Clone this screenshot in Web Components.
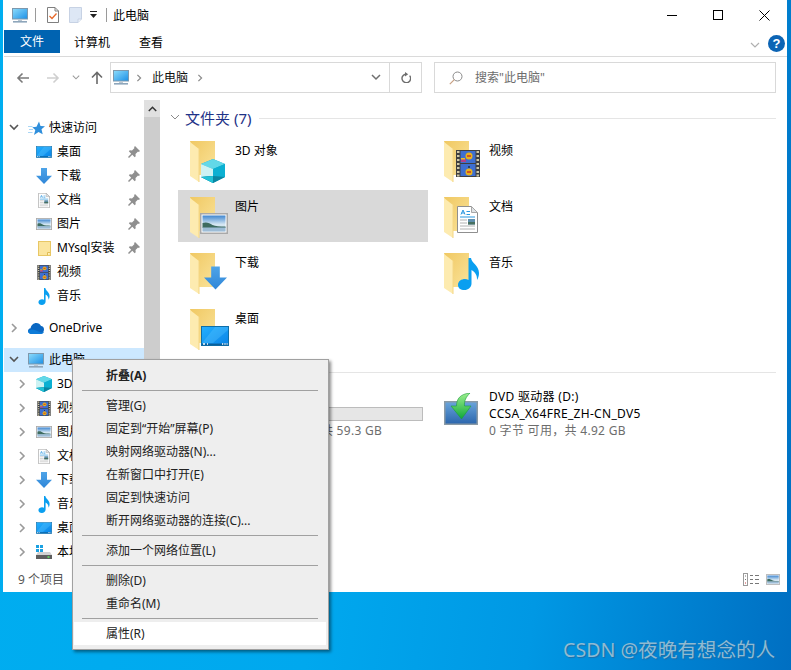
<!DOCTYPE html>
<html lang="zh-CN">
<head>
<meta charset="utf-8">
<title>此电脑</title>
<style>
  html, body { margin: 0; padding: 0; height: 670px; overflow: hidden; }
  body { font: 12px/17px "Noto Sans", "Noto Sans CJK SC", sans-serif; color: #000; }
</style>
</head>
<body>
<win-desktop>
  <win-window>
    <win-titlebar>此电脑</win-titlebar>
    <win-ribbon></win-ribbon>
    <win-address></win-address>
    <win-main>
      <win-nav slot="nav">
        <nav-row level="0" chev="down" icon="star">快速访问</nav-row>
        <nav-row level="1" icon="desktop" pin>桌面</nav-row>
        <nav-row level="1" icon="arrow" pin>下载</nav-row>
        <nav-row level="1" icon="doc" pin>文档</nav-row>
        <nav-row level="1" icon="pic" pin>图片</nav-row>
        <nav-row level="1" icon="smallfolder" pin>MYsql安装</nav-row>
        <nav-row level="1" icon="video">视频</nav-row>
        <nav-row level="1" icon="music">音乐</nav-row>
        <nav-row level="0" chev="right" icon="cloud" gap>OneDrive</nav-row>
        <nav-row level="0" chev="down" icon="monitor" gap active>此电脑</nav-row>
        <nav-row level="1" chev="right" icon="cube">3D 对象</nav-row>
        <nav-row level="1" chev="right" icon="video">视频</nav-row>
        <nav-row level="1" chev="right" icon="pic">图片</nav-row>
        <nav-row level="1" chev="right" icon="doc">文档</nav-row>
        <nav-row level="1" chev="right" icon="arrow">下载</nav-row>
        <nav-row level="1" chev="right" icon="music">音乐</nav-row>
        <nav-row level="1" chev="right" icon="desktop">桌面</nav-row>
        <nav-row level="1" chev="right" icon="storage">本地磁盘 (C:)</nav-row>
      </win-nav>
      <group-head>文件夹 (7)</group-head>
      <tile-grid>
        <win-tile over="cube">3D 对象</win-tile>
        <win-tile over="video">视频</win-tile>
        <win-tile over="pic" selected>图片</win-tile>
        <win-tile over="doc">文档</win-tile>
        <win-tile over="arrow">下载</win-tile>
        <win-tile over="music">音乐</win-tile>
        <win-tile over="desktop">桌面</win-tile>
      </tile-grid>
      <group-head second>设备和驱动器 (2)</group-head>
      <tile-grid>
        <drive-tile icon="hdd" name="本地磁盘 (C:)" free="34.6 GB 可用，共 59.3 GB" bar></drive-tile>
        <drive-tile icon="dvd" name="DVD 驱动器 (D:)" label="CCSA_X64FRE_ZH-CN_DV5" free="0 字节 可用，共 4.92 GB"></drive-tile>
      </tile-grid>
    </win-main>
    <win-status>9 个项目</win-status>
  </win-window>

  <ctx-menu slot="over">
    <ctx-item bold>折叠(A)</ctx-item>
    <ctx-sep></ctx-sep>
    <ctx-item>管理(G)</ctx-item>
    <ctx-item>固定到“开始”屏幕(P)</ctx-item>
    <ctx-item>映射网络驱动器(N)...</ctx-item>
    <ctx-item>在新窗口中打开(E)</ctx-item>
    <ctx-item>固定到快速访问</ctx-item>
    <ctx-item>断开网络驱动器的连接(C)...</ctx-item>
    <ctx-sep></ctx-sep>
    <ctx-item>添加一个网络位置(L)</ctx-item>
    <ctx-sep></ctx-sep>
    <ctx-item>删除(D)</ctx-item>
    <ctx-item>重命名(M)</ctx-item>
    <ctx-sep></ctx-sep>
    <ctx-item hot>属性(R)</ctx-item>
  </ctx-menu>
  <span slot="over" class="mark" style="position:absolute;left:563px;top:635px;font:19.6px/30px 'Noto Sans','Noto Sans CJK SC',sans-serif;color:#8fbad2;text-shadow:1px 1px 1px #1c6ea8;white-space:nowrap">CSDN @夜晚有想念的人</span>
</win-desktop>

<script>
const sky = `<linearGradient id="sky" x1="0" y1="0" x2="0" y2="1"><stop offset="0" stop-color="#3f86d0"/><stop offset=".55" stop-color="#d4e6f2"/></linearGradient>`;
const scr = `<linearGradient id="scr" x1="0" y1="0" x2="1" y2="1"><stop offset="0" stop-color="#8ddcfb"/><stop offset="1" stop-color="#1b8fe6"/></linearGradient>`;

// name: [viewBox width, viewBox height, markup]
const ICONS = {
  monitor: [16, 15, `<defs>${scr}</defs>
    <rect x=".5" y=".5" width="15" height="10.5" fill="url(#scr)" stroke="#7d98ad"/>
    <rect x="6" y="11.5" width="4" height="2" fill="#b9c6d0"/>
    <rect x="1" y="13" width="14" height="1.6" fill="#8ea6bb"/>`],
  desktop: [28, 20, `<defs><linearGradient id="d" x1="0" y1="0" x2="1" y2="1"><stop offset="0" stop-color="#23b0ff"/><stop offset="1" stop-color="#0a83e6"/></linearGradient></defs>
    <rect x=".5" y=".5" width="27" height="19" fill="url(#d)" stroke="#0f6ea8"/>
    <path d="M1 17 14 1h13v3L12 17z" fill="#5cc6ff" opacity=".35"/>
    <rect x="1" y="17.6" width="26" height="1.6" fill="#0b5f9a"/>
    <path d="M2 18h2M6 18h1M21 18h1.2M23.4 18h1.2M25.6 18h1" stroke="#fff" stroke-width="1.4"/>`],
  arrow: [24, 24, `<defs><linearGradient id="a" x1="0" y1="0" x2="0" y2="1"><stop offset="0" stop-color="#4ea4e8"/><stop offset="1" stop-color="#2f86d8"/></linearGradient></defs>
    <path d="M7.5 0h9v11.5H24L12 24 0 11.5h7.5z" fill="url(#a)"/>`],
  doc: [21, 27, `<path d="M.5.5h14l6 6v20H.5z" fill="#fff" stroke="#8f8f8f"/>
    <path d="M14.5.5v6h6z" fill="#dfe3e6" stroke="#a8a8a8"/>
    <path d="M4 8.5 6 4l2 4.500M4.500 7h3" fill="none" stroke="#2b97e0" stroke-width="1"/>
    <path d="M9.500 5.500h3.500M9.500 8.500h3.500M3 11h15" stroke="#2b97e0" fill="none" stroke-width="1.200"/>
    <path d="M3 14h7M3 17h7M3 20h15M3 23h15" stroke="#b2b2b2" fill="none"/>
    <rect x="11" y="13" width="7" height="5.500" fill="#5f8fae"/><rect x="11" y="16" width="7" height="2.500" fill="#48705f"/>`],
  pic: [28, 21, `<defs>${sky}</defs>
    <rect x=".75" y=".75" width="26.500" height="19.500" fill="#fff" stroke="#a9a9a9" stroke-width="1.500"/>
    <rect x="2.500" y="2.500" width="23" height="16" fill="url(#sky)"/>
    <path d="M2.500 10c4-1.500 7 0 10 2 3 1.500 7 1.500 13 1.500V15h-23z" fill="#3d6b60"/>
    <rect x="2.500" y="14.500" width="23" height="4" fill="#9dbcd6"/>`],
  video: [24, 27, `<rect width="24" height="27" fill="#3f3f3f"/>
    <path d="M1 2h2.500M1 6h2.500M1 10h2.500M1 14h2.500M1 18h2.500M1 22h2.500M1 25.500h2.500M20.500 2H23M20.500 6H23M20.500 10H23M20.500 14H23M20.500 18H23M20.500 22H23M20.500 25.500H23" stroke="#cfc9a8" stroke-width="2"/>
    <rect x="4.500" y="1" width="15" height="12" fill="#3e6fd0"/><rect x="4.500" y="14" width="15" height="12" fill="#3e6fd0"/>
    <circle cx="13" cy="6" r="3.500" fill="#e8b21c"/><path d="M11 6h4" stroke="#c9342a" stroke-width="1.500"/><path d="M5 9h5v3H5z" fill="#b0408a"/><path d="M5 8h4v1.500H5z" fill="#e6c028"/>
    <circle cx="13" cy="22" r="3.500" fill="#e8b21c"/><path d="M11 22h4" stroke="#c9342a" stroke-width="1.500"/><path d="M12.500 16h1v2h-1z" fill="#111"/>`],
  music: [21, 32, `<path d="M10.500 0H13c.5 5 8 7.500 8 15 0 3-1 5.500-2 7 .5-5-2.500-8.500-5.500-10v13.500c0 4-3.500 6.500-7 6.500-4 0-6.500-2-6.500-5 0-4 3.500-6 7-6 1.300 0 2.500.3 3.500 1z" fill="#0a9ff0"/>`],
  cube: [24, 24, `<path d="M12 0 24 5v13l-12 6L0 18V5z" fill="#0fa6c9"/>
    <path d="M0 5 12 0l12 5-12 5z" fill="#62d8e8"/>
    <path d="M0 5l12 5v7L0 18z" fill="#cdf2f3"/>
    <path d="M12 10l12-5v13l-12-1z" fill="#0cb0d2"/>
    <path d="M0 18l12-1 12 1-12 6z" fill="#0a86a2"/>
    <path d="M0 18l12-1v7z" fill="#22c2d6"/>`],
  star: [17, 15, `<path d="M11 .5l1.500 4.600 4.500.200-3.500 3 1.200 5L10.500 11 6 14l1.300-5-3-2.800 4.200-.400z" fill="#2f8fdc"/>
    <path d="M0 5.500h4.500M1 8.500h4M0 11.500h4.500" stroke="#a9d6f5" stroke-width="1.200"/>`],
  cloud: [16, 11, `<path d="M3.500 11C1.500 11 0 9.800 0 8.100c0-1.500 1-2.700 2.600-2.900C3.100 2.200 5.500 0 8.300 0c2.100 0 3.900 1.200 4.700 3 1.800.1 3 1.400 3 3.500S14.500 11 12.800 11z" fill="#0a67c2"/>
    <path d="M3.500 11C1.500 11 0 9.800 0 8.100 2 6.500 5 6 8 7.500s5.500 2.500 8 1.500c-.5 1.300-1.700 2-3.200 2z" fill="#0d7bd8"/>`],
  smallfolder: [13, 15, `<rect x=".5" y=".5" width="12" height="14" fill="#fbe59e" stroke="#e8c765"/>
    <path d="M9.500 14.500v-3h3" fill="#fff3c8" stroke="#e0bc55"/>`],
  storage: [16, 14, `<path d="M0 0h3v3H0zM4 0h3v3H4zM0 4h3v3H0zM4 4h3v3H4z" fill="#1ba1e2"/>
    <path d="M2 7h12l2 3H0z" fill="#d2d2d2"/>
    <rect y="10" width="16" height="4" fill="#5e5e5e"/>
    <rect x="11.500" y="11.200" width="2" height="1.600" fill="#5fe05f"/>`],
  pin: [12, 12, `<path d="M7 0l5 5-1.200 1L10 5.500 7.500 8l.2 2.200-1 1L4.300 8.800 1 12 0 11l3.200-3.300L.8 5.300l1-1L4 4.500 6.500 2 6 1.200z" fill="#8f8f8f"/>`],
  hdd: [34, 34, `<path d="M2 6h30l2 18H0z" fill="#dcdcdc" stroke="#9a9a9a"/><rect y="24" width="34" height="9" fill="#6a6a6a"/><rect x="26" y="27" width="4" height="3" fill="#5fe05f"/>`],
  dvd: [34, 32, `<defs><linearGradient id="s" x1="0" y1="0" x2="0" y2="1"><stop offset="0" stop-color="#6aa5dc"/><stop offset="1" stop-color="#2a65ac"/></linearGradient>
    <linearGradient id="g" x1="0" y1="0" x2="0" y2="1"><stop offset="0" stop-color="#9df08e"/><stop offset="1" stop-color="#0fa838"/></linearGradient></defs>
    <rect x=".75" y="8.750" width="32.500" height="22.500" fill="url(#s)" stroke="#8a9aa5" stroke-width="1.500"/>
    <path d="M26 0C16 1 12.500 6 12.500 13H7l10.500 13L27 13h-6.500C20 8 22 4 26 0z" fill="url(#g)" stroke="#1d9a3c" stroke-width=".6"/>`],
  checkdoc: [12, 16, `<path d="M.5.500h7.500l3.500 3.500v11.500H.5z" fill="#fff" stroke="#7f7f7f"/><path d="M8 .5V4h3.500" fill="none" stroke="#7f7f7f"/>
    <path d="M2.500 9l2.500 2.500 4.500-5" fill="none" stroke="#e8692a" stroke-width="1.300"/>`],
  palefile: [13, 16, `<path d="M.5.500h12v11.500l-3.500 3.500H.5z" fill="#dde7f5" stroke="#c7d2e4"/><path d="M12.500 12H9v3.500" fill="#eef3fa" stroke="#c7d2e4"/>`],
  search: [14, 14, `<circle cx="8.500" cy="5.500" r="4.500" fill="none" stroke="#8a8a8a"/><path d="M5.300 8.700.8 13.200" stroke="#c9a184" stroke-width="1.200"/>`],
  refresh: [11, 11, `<path d="M9.600 3.600A4.300 4.300 0 1 1 5.300 2.200" fill="none" stroke="#6d6d6d" stroke-width="1.400"/><path d="M5 0l3.200 2.200L5 4.500z" fill="#6d6d6d"/>`],
  detailsview: [17, 13, `<rect x=".5" y=".5" width="4" height="12" fill="#fff" stroke="#9a9a9a"/><path d="M2 3h1M2 6.500h1" stroke="#777"/><path d="M2 10h1" stroke="#d04040"/>
    <path d="M7 2.500h3M12 2.500h4M7 6.500h3M12 6.500h4M7 10.500h3M12 10.500h4" stroke="#777"/>`],
};

// over-icon box on a big folder: x, y, w, h
const OVER = {
  cube: [11, 19, 24, 24], pic: [10, 17, 28, 21], arrow: [14, 14, 23, 24], desktop: [11, 18, 28, 20],
  video: [12, 10, 24, 27], doc: [13, 10, 21, 27], music: [14, 6, 21, 32],
};

function define(name, css, html, init) {
  customElements.define(name, class extends HTMLElement {
    constructor() {
      super();
      this.attachShadow({ mode: 'open' });
      this.shadowRoot.innerHTML = `<style>${css}</style>${html}`;
      if (init) init(this, this.shadowRoot);
    }
  });
}

class WinIcon extends HTMLElement {
  constructor() {
    super();
    this.attachShadow({ mode: 'open' });
  }
  connectedCallback() {
    const [vw, vh, body] = ICONS[this.getAttribute('name')];
    const w = this.getAttribute('w') || vw;
    const h = this.getAttribute('h') || vh;
    this.shadowRoot.innerHTML = `<style>:host{display:block;flex:none;line-height:0}</style>
      <svg width="${w}" height="${h}" viewBox="0 0 ${vw} ${vh}" xmlns="http://www.w3.org/2000/svg">${body}</svg>`;
  }
}
customElements.define('win-icon', WinIcon);

class FolderIcon extends HTMLElement {
  constructor() {
    super();
    this.attachShadow({ mode: 'open' });
  }
  connectedCallback() {
    const over = this.getAttribute('over');
    const [x, y, w, h] = OVER[over];
    const [vw, vh, body] = ICONS[over];
    this.shadowRoot.innerHTML = `<style>:host{display:block;flex:none;line-height:0}</style>
      <svg width="45" height="48" viewBox="0 0 45 48" xmlns="http://www.w3.org/2000/svg">
        <defs><linearGradient id="f" x1="0" y1="0" x2="1" y2="1"><stop offset="0" stop-color="#f0c862"/><stop offset="1" stop-color="#fae39a"/></linearGradient></defs>
        <path d="M0 1h25v34H9z" fill="url(#f)"/>
        <path d="M0 2l9 7v33l-9-6z" fill="#fdebb0"/>
        <path d="M9 9v33" stroke="#f4d684"/>
        <svg x="${x}" y="${y}" width="${w}" height="${h}" viewBox="0 0 ${vw} ${vh}">${body}</svg>
      </svg>`;
  }
}
customElements.define('folder-icon', FolderIcon);

const chevron = (dir, color = '#7a7a7a', w = 1.5, size = 10) => {
  const pts = dir === 'down' ? '1,2 5,6 9,2' : '3,1 7,5 3,9';
  return `<svg width="${size}" height="${size}" viewBox="0 0 10 10"><polyline points="${pts}" fill="none" stroke="${color}" stroke-width="${w}"/></svg>`;
};

define('win-desktop', `
  :host { display: block; position: relative; width: 791px; height: 670px; overflow: hidden;
    background: linear-gradient(98deg, #00aef0 0%, #00a8ee 45%, #0098e4 70%, #006fc2 100%); }
`, `<slot></slot><slot name="over"></slot>`);

define('win-window', `
  :host { display: flex; flex-direction: column; width: 784px; height: 592px; margin-left: 3px; background: #fff; }
`, `<slot></slot>`);

define('win-titlebar', `
  :host { display: flex; align-items: center; height: 30px; flex: none; padding-left: 9px; }
  .sep { width: 1px; height: 14px; background: #9a9a9a; }
  .title { margin-left: 6px; }
  .caps { margin-left: auto; display: flex; align-items: center; }
  .cap { width: 46px; display: flex; justify-content: center; }
`, `
  <win-icon name="monitor"></win-icon>
  <span class="sep" style="margin-left:7px"></span>
  <win-icon name="checkdoc" style="margin-left:11px"></win-icon>
  <win-icon name="palefile" style="margin-left:10px"></win-icon>
  <svg style="margin-left:7px" width="10" height="10" viewBox="0 0 10 10"><path d="M1 1.500h7" stroke="#222"/><path d="M1 4h7L4.500 8z" fill="#222"/></svg>
  <span class="sep" style="margin-left:7px"></span>
  <span class="title"><slot></slot></span>
  <span class="caps">
    <span class="cap"><svg width="10" height="10"><path d="M0 5.500h10" stroke="#000"/></svg></span>
    <span class="cap"><svg width="10" height="10"><rect x=".5" y=".5" width="9" height="9" fill="none" stroke="#000"/></svg></span>
    <span class="cap"><svg width="11" height="11"><path d="M.5.500l10 10M10.500.500l-10 10" stroke="#000"/></svg></span>
  </span>
`);

define('win-ribbon', `
  :host { display: flex; align-items: stretch; height: 26px; flex: none; border-bottom: 1px solid #dadada; margin-left: 1px; font-size: 12px; }
  .tab { height: 23px; line-height: 25px; }
  .file { width: 56px; text-align: center; background: #0063b1; color: #fff; line-height: 23px; }
  .right { margin-left: auto; display: flex; align-items: flex-start; padding-top: 5px; gap: 7px; padding-right: 2px; }
  .help { width: 17px; height: 17px; border-radius: 50%; background: #0c64b4; color: #fff; font: bold 13px/17px "Liberation Sans", sans-serif; text-align: center; }
  .ch { margin-top: 3px; margin-right: 1px; }
`, `
  <span class="tab file">文件</span>
  <span class="tab" style="margin-left:14px">计算机</span>
  <span class="tab" style="margin-left:29px">查看</span>
  <span class="right"><span class="ch">${chevron('down', '#b0b0b0', 1.2)}</span><span class="help">?</span></span>
`);

define('win-address', `
  :host { display: flex; align-items: center; height: 31px; flex: none; margin-top: 5px; }
  .arrows { width: 107px; display: flex; align-items: center; flex: none; }
  .box { border: 1px solid #d9d9d9; height: 29px; display: flex; align-items: center; box-sizing: content-box; }
  .path { width: 310px; flex: none; }
  .crumb { margin-left: 9px; color: #111; }
  .refresh { width: 31px; height: 29px; border-left: 1px solid #d9d9d9; display: flex; align-items: center; justify-content: center; }
  .search { width: 340px; flex: none; margin-left: 12px; color: #6d6d6d; }
`, `
  <span class="arrows">
    <svg style="margin-left:13px" width="14" height="12" viewBox="0 0 14 12"><path d="M13 6H2M6.500 1.500 2 6l4.500 4.500" fill="none" stroke="#7a7a7a" stroke-width="1.600"/></svg>
    <svg style="margin-left:16px" width="14" height="12" viewBox="0 0 14 12"><path d="M1 6h11M7.500 1.500 12 6l-4.500 4.500" fill="none" stroke="#cfcfcf" stroke-width="1.600"/></svg>
    <span style="margin-left:12px;line-height:0">${chevron('down', '#9a9a9a', 1.3, 8)}</span>
    <svg style="margin-left:10px" width="14" height="14" viewBox="0 0 14 14"><path d="M7 13V2M2 6.500 7 1.500l5 5" fill="none" stroke="#6a6a6a" stroke-width="1.600"/></svg>
  </span>
  <span class="box path">
    <win-icon name="monitor" style="margin-left:2px"></win-icon>
    <span style="margin-left:6px;line-height:0">${chevron('right', '#8a8a8a', 1.5, 8)}</span>
    <span class="crumb">此电脑</span>
    <span style="margin-left:8px;line-height:0">${chevron('right', '#8a8a8a', 1.5, 8)}</span>
    <span style="margin-left:auto;margin-right:8px;line-height:0">${chevron('down', '#6f6f6f', 1.5)}</span>
    <span class="refresh"><win-icon name="refresh"></win-icon></span>
  </span>
  <span class="box search">
    <win-icon name="search" style="margin-left:14px"></win-icon>
    <span style="margin-left:12px">搜索"此电脑"</span>
  </span>
`);

define('win-main', `
  :host { display: flex; height: 472px; flex: none; margin-top: 5px; }
  .nav { flex: none; width: 157px; display: flex; }
  .content { flex: 1; min-width: 0; padding-top: 10px; }
`, `
  <div class="nav"><slot name="nav"></slot></div>
  <div class="content"><slot></slot></div>
`);

define('win-nav', `
  :host { display: flex; width: 157px; height: 472px; margin-left: 0; }
  .rows { width: 140px; padding: 18px 0 0 1px; flex: none; }
  .bar { width: 16px; flex: none; background: #f0f0f0; display: flex; flex-direction: column; margin-top: 2px; }
  .up { height: 17px; background: #e0e0e0; display: flex; align-items: center; justify-content: center; }
  .thumb { height: 320px; background: #cdcdcd; }
`, `
  <div class="rows"><slot></slot></div>
  <div class="bar">
    <div class="up"><svg width="9" height="6" viewBox="0 0 9 6"><path d="M.8 5 4.500 1.300 8.200 5" fill="none" stroke="#333" stroke-width="1.500"/></svg></div>
    <div class="thumb"></div>
  </div>
`);

define('nav-row', `
  :host { display: flex; align-items: center; height: 24px; white-space: nowrap; overflow: hidden; position: relative; }
  :host([gap]) { margin-top: 8px; }
  :host([active]) { background: #cce8ff; }
  .ch { width: 10px; flex: none; line-height: 0; }
  .txt { margin-left: 5px; padding-bottom: 2px; }
  .ic { display: flex; justify-content: center; flex: none; width: 16px; margin-left: 9px; }
  .pin { position: absolute; right: 4px; top: 6px; }
`, `<span class="ch"></span><span class="ic"></span><span class="txt"><slot></slot></span><win-icon class="pin" name="pin" hidden></win-icon>`,
(el, root) => {
  const lvl = el.getAttribute('level');
  const ch = el.getAttribute('chev');
  const chEl = root.querySelector('.ch');
  if (ch) chEl.innerHTML = chevron(ch, ch === 'down' ? '#555' : '#9a9a9a', 1.6);
  chEl.style.marginLeft = lvl === '0' ? '5px' : '13px';
  const icon = el.getAttribute('icon');
  const [vw, vh] = ICONS[icon];
  const sized = { desktop: [16, 12], arrow: [16, 16], doc: [12, 15], pic: [16, 12], video: [14, 15], music: [12, 17], cube: [16, 16] }[icon] || [vw, vh];
  root.querySelector('.ic').innerHTML = `<win-icon name="${icon}" w="${sized[0]}" h="${sized[1]}"></win-icon>`;
  if (el.hasAttribute('pin')) root.querySelector('.pin').hidden = false;
  else root.querySelector('.pin').remove();
});

define('group-head', `
  :host { display: flex; align-items: center; height: 20px; color: #1e3287; font-size: 15px; line-height: 20px; margin: 0 11px 6px 10px; }
  :host([second]) { margin-top: 8px; }
  .ch { line-height: 0; margin-right: 5px; }
  .line { flex: 1; height: 1px; background: #e5e5e5; margin-left: 8px; }
  .t { white-space: nowrap; }
`, `<span class="ch">${chevron('down', '#8a8a8a', 1)}</span><span class="t"><slot></slot></span><span class="line"></span>`);

define('tile-grid', `
  :host { display: grid; grid-template-columns: 250px 250px; column-gap: 4px; row-gap: 4px; margin-left: 18px; }
`, `<slot></slot>`);

define('win-tile', `
  :host { display: flex; height: 52px; padding-left: 12px; box-sizing: border-box; padding-top: 6px; }
  :host([selected]) { background: #d9d9d9; }
  .t { padding-top: 2px; }
`, `<span class="ic"></span><span class="t"><slot></slot></span>`,
(el, root) => {
  root.querySelector('.ic').innerHTML = `<folder-icon over="${el.getAttribute('over')}"></folder-icon>`;
});

define('drive-tile', `
  :host { display: flex; height: 52px; padding-left: 12px; box-sizing: border-box; letter-spacing: .3px; }
  .ic { width: 45px; flex: none; padding-top: 5px; }
  .body { flex: 1; min-width: 0; white-space: nowrap; padding-right: 5px; }
  .bar { height: 12px; margin: 2px 0 1px; border: 1px solid #bcbcbc; background: #e6e6e6; }
  .free { color: #6d6d6d; }
`, `<span class="ic"></span><div class="body"><div class="name"></div><div class="mid"></div><div class="free"></div></div>`,
(el, root) => {
  root.querySelector('.ic').innerHTML = `<win-icon name="${el.getAttribute('icon')}"></win-icon>`;
  root.querySelector('.name').textContent = el.getAttribute('name');
  root.querySelector('.free').textContent = el.getAttribute('free');
  const mid = root.querySelector('.mid');
  if (el.hasAttribute('bar')) mid.className = 'bar';
  else mid.textContent = el.getAttribute('label');
});

define('win-status', `
  :host { display: flex; align-items: center; height: 22px; flex: none; box-sizing: border-box; padding: 0 0 3px 15px; color: #555; }
  .views { margin-left: auto; display: flex; align-items: center; gap: 6px; padding-right: 7px; }
`, `<slot></slot><span class="views"><win-icon name="detailsview" style="margin-left:1px"></win-icon><win-icon name="pic" w="14" h="11"></win-icon></span>`);

define('ctx-menu', `
  :host { display: block; position: absolute; left: 72px; top: 359px; width: 252px; padding: 4px 2px 4px 1px; box-sizing: content-box;
    background: #eee; border: 1px solid #a0a0a0; box-shadow: 2px 2px 3px rgba(0,0,0,.45); color: #222; }
`, `<slot></slot>`);

define('ctx-item', `
  :host { display: block; height: 23px; line-height: 23px; padding-left: 32px; white-space: nowrap; }
  :host([bold]) { font-weight: 700; }
  :host([hot]) { background: #fff; }
`, `<slot></slot>`);

define('ctx-sep', `
  :host { display: block; height: 7px; position: relative; }
  i { display: block; position: absolute; left: 8px; right: 8px; top: 3px; height: 1px; background: #a0a0a0; }
`, `<i></i>`);
</script>
</body>
</html>
